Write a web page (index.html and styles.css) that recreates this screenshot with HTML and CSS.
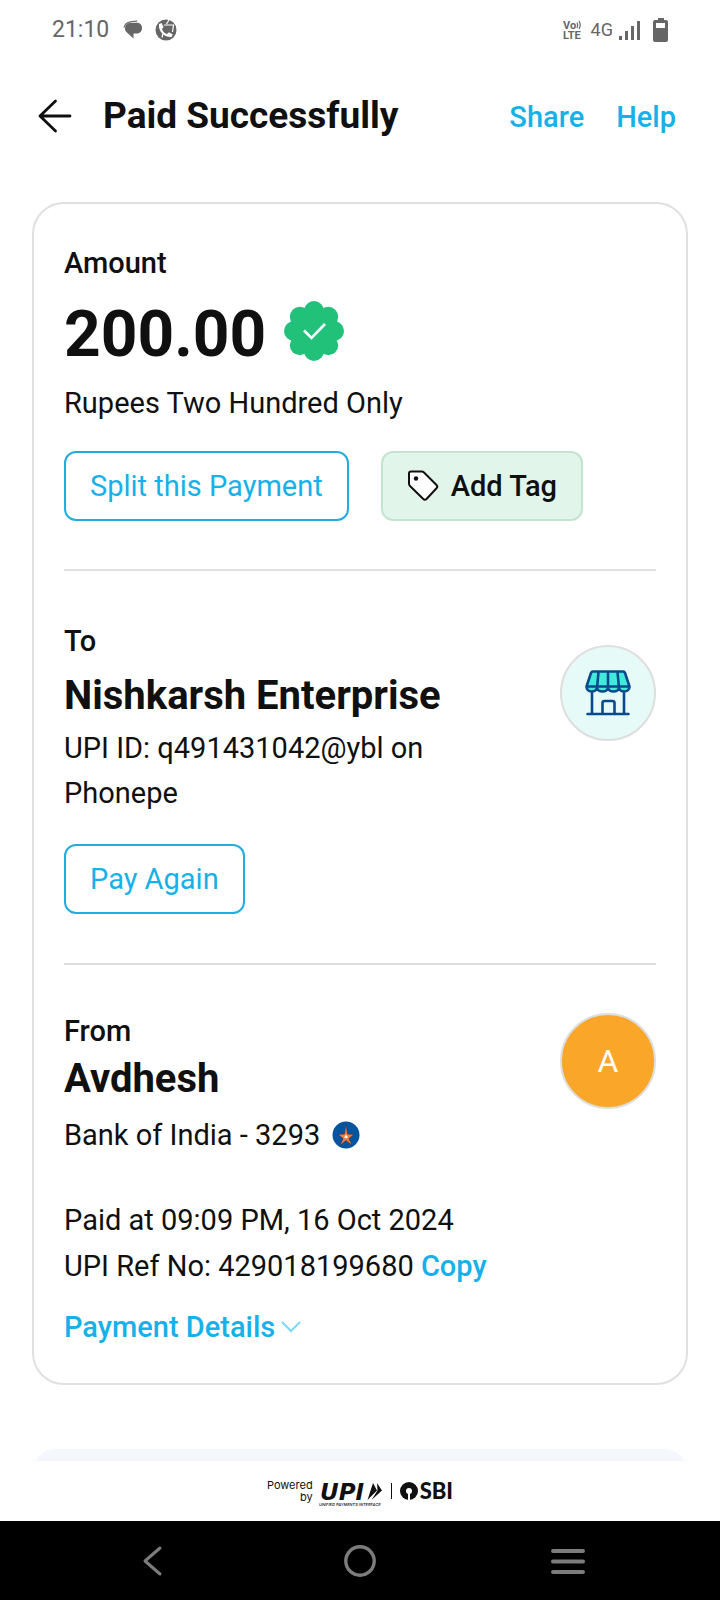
FILE: index.html
```html
<!DOCTYPE html>
<html lang="en">
<head>
<meta charset="utf-8">
<meta name="viewport" content="width=device-width, initial-scale=1">
<title>Paid Successfully</title>
<link rel="stylesheet" href="styles.css">
</head>
<body>
<div class="screen">
  <div class="status">
    <span class="clock">21:10</span>
    <svg class="status-chat" viewBox="0 0 20 20" width="20" height="20" aria-hidden="true">
      <path d="M1 7.500C1.500 3 5 1.200 14 1.200" fill="none" stroke="#666" stroke-width="1.200"/>
      <path d="M8 2.800h6c3 0 5 2.200 5 5.200s-2 5.500-5 5.500h-3.500v5l-5.500-5C3 12 2 10.500 2 8.500 2 5 4.500 2.800 8 2.800z" fill="#666"/>
    </svg>
    <svg class="status-call" viewBox="0 0 22 22" width="22" height="22" aria-hidden="true">
      <circle cx="11" cy="11" r="10.500" fill="#666"/>
      <path d="M4 5l2.500-1 2 4-1.500 2c.8 2.500 2.500 4.200 5 5l2-1.700 3.800 2.200-1.300 2.500C10.500 19 3 13 4 5z" fill="#fff"/>
      <path d="M9 6h9.500l-1 7M11.500 5l2.500-4M8 14.500l-1 4" fill="none" stroke="#fff" stroke-width="1.200"/>
    </svg>
    <span class="status-gap"></span>
    <svg viewBox="0 -3 20 26" width="20" height="26" role="img" aria-label="VoLTE">
      <text x="0" y="9" class="volte">Vo</text>
      <text x="0" y="19" class="volte">LTE</text>
      <path d="M14 2.500q1.500 2.500 0 5.500M16 1q2.500 4 0 8" fill="none" stroke="#666" stroke-width="1.200"/>
    </svg>
    <span class="network">4G</span>
    <svg class="status-signal" viewBox="0 0 22 20" width="22" height="20" aria-hidden="true">
      <path d="M0 16h3v4H0zM6 11h3v9H6zM12 6h3v14h-3zM18 1h3v19h-3z" fill="#666"/>
    </svg>
    <svg class="status-battery" viewBox="0 0 15 24" width="15" height="24" aria-hidden="true">
      <path d="M5 0h6v2h2a2 2 0 0 1 2 2v18a2 2 0 0 1-2 2H2a2 2 0 0 1-2-2V4a2 2 0 0 1 2-2h3zM3 5v5h9V5z" fill="#666" fill-rule="evenodd"/>
    </svg>
  </div>

  <header class="header">
    <button class="back" type="button" aria-label="Back">
      <svg viewBox="0 0 34 34" width="34" height="34" aria-hidden="true">
        <path d="M17.500 2L2 17l15.500 15M2 17h30" fill="none" stroke="#101010" stroke-width="2.800" stroke-linecap="round" stroke-linejoin="round"/>
      </svg>
    </button>
    <h1 class="title">Paid Successfully</h1>
    <nav class="header-links">
      <a href="#">Share</a>
      <a href="#">Help</a>
    </nav>
  </header>

  <main class="content">
    <article class="card">
      <section class="section section-amount">
        <p class="label">Amount</p>
        <div class="amount-row">
          <span class="amount">200.00</span>
          <svg class="badge" viewBox="0 0 60 60" width="60" height="60" role="img" aria-label="Paid">
            <g fill="#21c17a">
              <circle cx="30" cy="30" r="23"/>
              <circle cx="30" cy="10" r="10"/><circle cx="44.200" cy="15.800" r="10"/>
              <circle cx="50" cy="30" r="10"/><circle cx="44.200" cy="44.200" r="10"/>
              <circle cx="30" cy="50" r="10"/><circle cx="15.800" cy="44.200" r="10"/>
              <circle cx="10" cy="30" r="10"/><circle cx="15.800" cy="15.800" r="10"/>
            </g>
            <path d="M20 29.500l7.500 7.500L41 23" fill="none" stroke="#fff" stroke-width="2.600"/>
          </svg>
        </div>
        <p class="words">Rupees Two Hundred Only</p>
        <div class="actions">
          <button class="btn" type="button">Split this Payment</button>
          <button class="btn btn-tag" type="button">
            <svg viewBox="0 0 32 32" width="32" height="32" aria-hidden="true">
              <path d="M4 1.500h10.500c1 0 1.800.3 2.500 1L29.500 15c1 1 1 2.200 0 3.200L19.500 29c-1 1-2.200 1-3.200 0L3 16c-.7-.7-1-1.500-1-2.500V3.500c0-1.200.8-2 2-2z" fill="#fff" stroke="#101010" stroke-width="2"/>
              <circle cx="9" cy="8.500" r="2.200" fill="#101010"/>
            </svg>
            Add Tag
          </button>
        </div>
      </section>

      <section class="section section-to">
        <div class="party">
          <p class="label">To</p>
          <h2 class="name">Nishkarsh Enterprise</h2>
          <p class="upi-id">UPI ID: q491431042@ybl on Phonepe</p>
          <button class="btn" type="button">Pay Again</button>
        </div>
        <div class="avatar avatar-store">
          <svg viewBox="0 0 48 48" width="48" height="48" role="img" aria-label="Store">
            <path d="M9 2.500h30l6 15H3z" fill="#41ebdc"/>
            <path d="M3 17.500h42c0 3-2 5-5 5s-5-1.500-5.500-3.500c-.5 2-2.500 3.500-5 3.500S24.500 21 24 19c-.5 2-2.500 3.500-5.500 3.500S14 21 13.500 19c-.5 2-2.500 3.500-5.500 3.500s-5-2-5-5z" fill="#41ebdc"/>
            <path d="M9 2.500h30q1.500 0 2 1.500l4.500 13.500c0 3-2.200 5-5.200 5s-4.800-1.500-5.300-3.500c-.5 2-2.500 3.500-5.500 3.500s-5-1.500-5.500-3.500c-.5 2-2.500 3.500-5.500 3.500s-5-1.500-5.500-3.500c-.5 2-2.500 3.500-5.500 3.500-3 0-5-2-5-5L7 4q.5-1.500 2-1.500zM3 17.500h42M14.500 3l-1.500 16M24 3v16M33.500 3l1.500 16M8 22.500V45M40 22.500V45M3.500 45h41M18.500 45V34q0-2 2-2h8q2 0 2 2v11" fill="none" stroke="#0a4a8c" stroke-width="2.600" stroke-linecap="round" stroke-linejoin="round"/>
          </svg>
        </div>
      </section>

      <section class="section section-from">
        <div class="party">
          <p class="label">From</p>
          <h2 class="name name-from">Avdhesh</h2>
          <p class="bank">Bank of India - 3293
            <svg viewBox="0 0 28 28" width="28" height="28" role="img" aria-label="Bank of India">
              <circle cx="14" cy="14" r="13.500" fill="#0554a0"/>
              <path d="M14 3l1.600 10 6.400.5-5 4 3 7-6-5-6 5 3-7-5-4 6.400-.5z" fill="#f47b3a" stroke="#222b50" stroke-width=".500"/>
              <path d="M12 16.500l2-3 2 3-2 .8z" fill="#fff"/>
            </svg>
          </p>
          <div class="meta">
            <p>Paid at 09:09 PM, 16 Oct 2024</p>
            <p>UPI Ref No: 429018199680 <button class="link" type="button">Copy</button></p>
          </div>
          <button class="link details" type="button">Payment Details
            <svg viewBox="0 0 20 12" width="20" height="12" aria-hidden="true">
              <path d="M1 1l9 9 9-9" fill="none" stroke="#7fd6f5" stroke-width="2"/>
            </svg>
          </button>
        </div>
        <div class="avatar avatar-initial">A</div>
      </section>
    </article>
    <div class="next-card"></div>
  </main>

  <footer class="powered">
    <p class="powered-by">Powered<br>by</p>
    <svg class="upi" viewBox="0 -7 66 37" width="66" height="37" role="img" aria-label="UPI">
      <text x="1" y="20" class="upi-mark">UPI</text>
      <path d="M54 3l4 7.500L48.500 20z" fill="#101010"/>
      <path d="M58 3l5 7.500L52.500 20l6-9.500z" fill="#101010"/>
      <text x="0" y="26" class="upi-caption">UNIFIED PAYMENTS INTERFACE</text>
    </svg>
    <span class="powered-rule"></span>
    <span class="sbi">
      <svg viewBox="0 0 18 18" width="18" height="18" aria-hidden="true">
        <circle cx="9" cy="9" r="9" fill="#101010"/>
        <circle cx="9" cy="9" r="3" fill="#fff"/>
        <path d="M8 9h2v9H8z" fill="#fff"/>
      </svg>SBI</span>
  </footer>

  <nav class="system-nav">
    <button type="button" aria-label="Back">
      <svg viewBox="0 0 32 32" width="32" height="32" aria-hidden="true"><path d="M23 3L8 16l15 13" fill="none" stroke="#7c7c7c" stroke-width="3" stroke-linecap="round" stroke-linejoin="round"/></svg>
    </button>
    <button type="button" aria-label="Home">
      <svg viewBox="0 0 32 32" width="32" height="32" aria-hidden="true"><circle cx="16" cy="16" r="14.200" fill="none" stroke="#7c7c7c" stroke-width="3.400"/></svg>
    </button>
    <button type="button" aria-label="Recent apps">
      <svg viewBox="0 0 34 32" width="34" height="32" aria-hidden="true"><path d="M2 6h30M2 16.500h30M2 27h30" stroke="#7c7c7c" stroke-width="4" stroke-linecap="round"/></svg>
    </button>
  </nav>
</div>
</body>
</html>
```

FILE: styles.css
```css
* { box-sizing: border-box; }

body, h1, h2, p { margin: 0; }

body {
  font-family: Roboto, "Liberation Sans", sans-serif;
  font-size: 29px;
  line-height: 36px;
  color: #101010;
  background: #fff;
}

button {
  font: inherit;
  color: inherit;
  background: none;
  border: 0;
  padding: 0;
}

svg { display: block; flex: none; }

.screen {
  display: flex;
  flex-direction: column;
  height: 100vh;
}

.status {
  display: flex;
  align-items: center;
  flex: none;
  height: 60px;
  padding: 0 52px;
  color: #666;
}

.clock { font-size: 23px; }
.status-chat { margin-left: 14px; }
.status-call { margin-left: 12px; }
.status-gap { flex: 1; }

.volte {
  font-family: Roboto, sans-serif;
  font-size: 11px;
  font-weight: 700;
  fill: #666;
}

.network { margin-left: 8px; font-size: 18px; }
.status-signal { margin-left: 6px; }
.status-battery { margin-left: 12px; }

.header {
  display: flex;
  align-items: center;
  flex: none;
  height: 112px;
  padding: 0 44px 0 38px;
}

.title {
  margin-left: 31px;
  font-size: 37px;
  line-height: 44px;
  font-weight: 700;
}

.header-links {
  display: flex;
  gap: 32px;
  margin-left: auto;
  padding-top: 2px;
}

.header-links a, .link {
  color: #16b1e9;
  font-weight: 500;
  text-decoration: none;
}

.content {
  flex: 1;
  min-height: 0;
  overflow: hidden;
  padding: 30px 32px 0;
}

.card {
  padding: 0 30px 38px;
  border: 2px solid #e0e0e0;
  border-radius: 32px;
}

.section + .section { border-top: 2px solid #e0e0e0; }

.section-amount { padding: 41px 0 48px; }

.section-to, .section-from {
  display: flex;
  justify-content: space-between;
  gap: 32px;
}

.section-to { padding: 52px 0 49px; }
.section-from { padding-top: 48px; }

.label { font-weight: 500; }

.amount-row {
  display: flex;
  gap: 18px;
  margin-top: 16px;
}

.amount {
  font-size: 64px;
  line-height: 76px;
  font-weight: 700;
}

.badge { margin-top: 4px; }
.words { margin-top: 12px; }

.actions {
  display: flex;
  gap: 32px;
  margin-top: 30px;
}

.btn {
  display: flex;
  align-items: center;
  justify-content: center;
  height: 70px;
  padding: 0 24px;
  border: 2px solid #22ade0;
  border-radius: 12px;
  color: #16b1e9;
}

.btn-tag {
  gap: 12px;
  border-color: #c3e5cf;
  background: #e1f5ea;
  color: #101010;
  font-weight: 500;
}

.party { flex: 0 1 400px; }

.name {
  margin-top: 11px;
  font-size: 40px;
  line-height: 52px;
  font-weight: 700;
}

.name-from { margin-top: 4px; }

.upi-id {
  margin: 4px 0 28px;
  line-height: 45px;
}

.avatar {
  display: flex;
  align-items: center;
  justify-content: center;
  flex: none;
  width: 96px;
  height: 96px;
  border: 2px solid #dedede;
  border-radius: 50%;
}

.avatar-store { margin-top: 22px; background: #e6fbf8; }

.avatar-initial {
  background: #f9a629;
  color: #fff;
  font-size: 32px;
}

.bank {
  display: flex;
  align-items: center;
  gap: 12px;
  margin-top: 12px;
}

.meta { margin-top: 44px; line-height: 46px; white-space: nowrap; }

.details {
  display: flex;
  align-items: center;
  gap: 6px;
  margin-top: 20px;
}

.next-card {
  height: 160px;
  margin-top: 64px;
  border-radius: 24px;
  background: #f4f8fd;
}

.powered {
  display: flex;
  align-items: center;
  justify-content: center;
  flex: none;
  height: 60px;
  background: #fff;
}

.powered-by {
  font-family: Inter, sans-serif;
  font-size: 11px;
  line-height: 12px;
  text-align: right;
}

.upi { margin-left: 6px; }

.upi-mark {
  font: italic 700 23px "DejaVu Sans", sans-serif;
  fill: #101010;
}

.upi-caption {
  font: italic 500 4px Inter, sans-serif;
  fill: #101010;
}

.powered-rule {
  width: 1px;
  height: 16px;
  margin: 0 8px 0 6px;
  background: #101010;
}

.sbi {
  display: flex;
  align-items: center;
  gap: 2px;
  font: 900 22px/28px Lato, sans-serif;
}

.system-nav {
  display: flex;
  align-items: center;
  justify-content: space-around;
  flex: none;
  height: 79px;
  padding: 0 48px 0 50px;
  background: #000;
}
```
